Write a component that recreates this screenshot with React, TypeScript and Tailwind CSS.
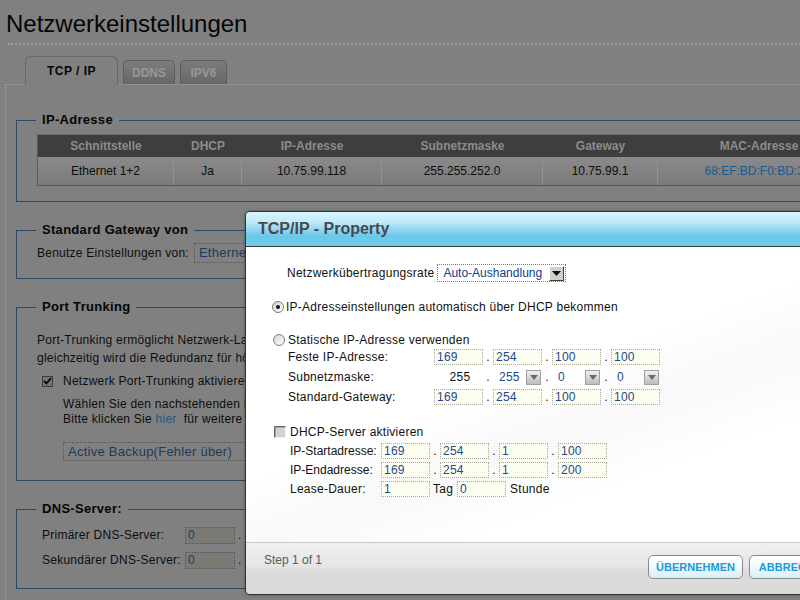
import React from "react";

const Tri = ({ big }: { big?: boolean }) =>
  big ? (
    <svg width="9" height="5" viewBox="0 0 9 5">
      <path d="M0 0 H9 L4.5 5 Z" fill="#111" />
    </svg>
  ) : (
    <svg width="8" height="5" viewBox="0 0 8 5">
      <path d="M0 0 H8 L4 5 Z" fill="#6a6a6a" />
    </svg>
  );

const Field = ({ v }: { v: string }) => (
  <div className="w-[49px] h-[16px] border border-dotted border-[#a9a99c] bg-[#fdfdef] pl-[2px] text-[#1c4a94] leading-[14px]">
    {v}
  </div>
);

const Sep = () => <div className="w-[10px] text-center leading-[16px] text-[#222]">.</div>;

const SubSel = ({ v }: { v: string }) => (
  <div className="w-[49px] h-[16px] flex items-center justify-between pl-[6px] pr-[1px] text-[#1c4a94]">
    <span>{v}</span>
    <div className="w-[15px] h-[15px] flex items-center justify-center border border-[#a0a0a0] bg-gradient-to-b from-[#f2f2f2] to-[#bdbdbd]">
      <Tri />
    </div>
  </div>
);

const Radio = ({ on }: { on?: boolean }) => (
  <div className="w-[12px] h-[12px] shrink-0 rounded-full border border-[#7a7a7a] bg-gradient-to-br from-[#d6d6d6] to-white flex items-center justify-center">
    {on && <div className="w-[4px] h-[4px] rounded-full bg-[#111]" />}
  </div>
);

const Legend = ({ children }: { children: React.ReactNode }) => (
  <legend className="ml-[-1px] px-[6px] text-[13px] font-bold leading-[16px] tracking-[0.3px] text-[#050505]">
    {children}
  </legend>
);

export default function App() {
  const cols = [136, 68, 140, 161, 115, 202];
  const heads = ["Schnittstelle", "DHCP", "IP-Adresse", "Subnetzmaske", "Gateway", "MAC-Adresse"];
  const vals = ["Ethernet 1+2", "Ja", "10.75.99.118", "255.255.252.0", "10.75.99.1", "68:EF:BD:F0:BD:3C"];
  return (
    <div className="relative w-[800px] h-[600px] overflow-hidden bg-[#808080] font-['Liberation_Sans',Arial,sans-serif] text-[12px] tracking-[0.25px] text-[#0d0d0d]">
      <div className="w-[900px]">
        <h1 className="pl-[6px] pt-[10px] text-[24px] leading-[28px] font-normal tracking-normal text-[#050505]">Netzwerkeinstellungen</h1>
        <div className="ml-[8px] mt-[5px] border-t-2 border-dotted border-[#9c9c9c]" />
        <div className="mt-[11px] flex items-end gap-[5px] pl-[25px]">
          <div className="relative z-10 -mb-px w-[93px] h-[29px] rounded-t-[6px] border border-b-0 border-[#686868] bg-[#808080] flex items-center justify-center text-[12px] font-bold tracking-[0.5px] text-[#050505]">
            TCP / IP
          </div>
          <div className="w-[52px] h-[24px] rounded-t-[5px] border border-b-0 border-[#5e5e5e] bg-gradient-to-b from-[#7c7c7c] to-[#676767] flex items-center justify-center text-[12px] font-bold tracking-normal text-[#979797]">
            DDNS
          </div>
          <div className="w-[47px] h-[24px] rounded-t-[5px] border border-b-0 border-[#5e5e5e] bg-gradient-to-b from-[#7c7c7c] to-[#676767] flex items-center justify-center text-[12px] font-bold tracking-normal text-[#979797]">
            IPV6
          </div>
        </div>
        <div className="ml-[5px] h-[520px] border-t border-l border-dotted border-[#a2a2a2] pl-[10px]">
          {/* IP-Adresse */}
          <fieldset className="mt-[27px] w-[880px] border border-[#2b4866] pl-[20px] pb-[15px]">
            <Legend>IP-Adresse</Legend>
            <div className="mt-[6px] border-l border-[#5a5a5a] tracking-normal">
              <div className="flex h-[23px] bg-[#3e3e3e] border-t border-[#6e6e6e]">
                {heads.map((h, i) => (
                  <div key={h} style={{ width: cols[i] }} className="flex items-center justify-center font-bold text-[#8c8c8c]">
                    {h}
                  </div>
                ))}
              </div>
              <div className="flex h-[29px] bg-gradient-to-b from-[#8a8a8a] to-[#7b7b7b] border-b border-[#575757]">
                {vals.map((v, i) => (
                  <div
                    key={v}
                    style={{ width: cols[i] }}
                    className={`flex items-center justify-center border-r border-[#939393] ${i === 5 ? "text-[#1b5a8c]" : "text-[#0d0d0d]"}`}
                  >
                    {v}
                  </div>
                ))}
              </div>
            </div>
          </fieldset>

          {/* Standard Gateway */}
          <fieldset className="mt-[20px] w-[880px] border border-[#2b4866] pl-[20px] pb-[15px]">
            <Legend>Standard Gateway von</Legend>
            <div className="mt-[5px] flex items-center h-[20px]">
              <span className="whitespace-nowrap">Benutze Einstellungen von:</span>
              <div className="ml-[5px] w-[150px] h-[20px] border border-dotted border-[#555] pl-[4px] flex items-center text-[#1d3a5c] text-[13px]">
                Ethernet 1+2
              </div>
            </div>
          </fieldset>

          {/* Port Trunking */}
          <fieldset className="mt-[20px] w-[880px] border border-[#2b4866] pl-[20px] pb-[19px]">
            <Legend>Port Trunking</Legend>
            <div className="mt-[16px] leading-[18px] whitespace-nowrap">
              <div>Port-Trunking ermöglicht Netzwerk-Lastausgleich durch die Bündelung der Ethernet-Schnittstellen,</div>
              <div>gleichzeitig wird die Redundanz für höhere Verfügbarkeit verbessert.</div>
            </div>
            <div className="mt-[5px] h-[18px] flex items-center pl-[5px]">
              <div className="w-[11px] h-[11px] border border-[#3c3c3c] bg-[#777] flex items-center justify-center">
                <svg width="9" height="8" viewBox="0 0 9 8">
                  <path d="M1 4 L3.5 6.5 L8 1" stroke="#050505" strokeWidth="1.8" fill="none" />
                </svg>
              </div>
              <span className="ml-[10px] whitespace-nowrap">Netzwerk Port-Trunking aktivieren</span>
            </div>
            <div className="mt-[7px] pl-[26px] leading-[15px] whitespace-nowrap">
              <div>Wählen Sie den nachstehenden Port-Trunking-Modus aus.</div>
              <div>
                Bitte klicken Sie <span className="text-[#1b5a8c]">hier</span>&nbsp; für weitere Informationen.
              </div>
              <div className="mt-[15px] w-[220px] h-[19px] border border-dotted border-[#555] pl-[4px] flex items-center text-[#1d3a5c] text-[13px]">
                Active Backup(Fehler über)
              </div>
            </div>
          </fieldset>

          {/* DNS */}
          <fieldset className="mt-[20px] w-[880px] border border-[#2b4866] pl-[20px] pb-[20px]">
            <Legend>DNS-Server:</Legend>
            <div className="mt-[10px] pl-[5px] flex items-center h-[16px]">
              <span className="w-[143px] whitespace-nowrap">Primärer DNS-Server:</span>
              <div className="w-[50px] h-[17px] border border-dotted border-[#555] bg-[#7b7b76] pl-[2px] text-[#1d3a5c] leading-[15px]">0</div>
              <span className="ml-[3px]">.</span>
            </div>
            <div className="mt-[9px] pl-[5px] flex items-center h-[16px]">
              <span className="w-[143px] whitespace-nowrap">Sekundärer DNS-Server:</span>
              <div className="w-[50px] h-[17px] border border-dotted border-[#555] bg-[#7b7b76] pl-[2px] text-[#1d3a5c] leading-[15px]">0</div>
              <span className="ml-[3px]">.</span>
            </div>
          </fieldset>
        </div>
      </div>

      {/* Dialog */}
      <div className="absolute left-[245px] top-[211px] w-[620px] h-[384px] flex flex-col rounded-[5px] border border-[#2f3540] overflow-hidden shadow-[0_0_3px_rgba(0,0,0,0.4)]">
        <div className="h-[35px] shrink-0 border-b border-[#3a3a3a] bg-[linear-gradient(to_bottom,#d8f6fe_0%,#bfe9fa_30%,#8cd4f0_55%,#6ac9e8_70%,#6ecde9_100%)] pl-[12px] flex items-center">
          <span className="text-[16px] font-bold tracking-normal text-[#464a4e]">TCP/IP - Property</span>
        </div>
        <div className="flex-1 bg-[linear-gradient(160deg,#ffffff_0%,#ffffff_45%,#f8f8f8_58%,#ffffff_72%)] text-[#111]">
          <div className="mt-[17px] pl-[41px] flex items-center h-[18px]">
            <span className="whitespace-nowrap">Netzwerkübertragungsrate</span>
            <div className="ml-[3px] w-[129px] h-[18px] border border-dotted border-[#7a7a7a] flex items-center justify-between pl-[5px] pr-[1px] text-[#0e3c8c] tracking-normal">
              <span>Auto-Aushandlung</span>
              <div className="w-[15px] h-[15px] bg-[#d4d0c8] border border-t-white border-l-white border-b-[#404040] border-r-[#404040] flex items-center justify-center">
                <Tri big />
              </div>
            </div>
          </div>
          <div className="mt-[17px] pl-[26px] h-[16px] flex items-center">
            <Radio on />
            <span className="ml-[2px] whitespace-nowrap">IP-Adresseinstellungen automatisch über DHCP bekommen</span>
          </div>
          <div className="mt-[17px] pl-[27px] h-[15px] flex items-center">
            <Radio />
            <span className="ml-[3px] whitespace-nowrap">Statische IP-Adresse verwenden</span>
          </div>
          <div className="pl-[42px]">
            <div className="h-[20px] flex items-center">
              <span className="w-[146px] shrink-0 whitespace-nowrap">Feste IP-Adresse:</span>
              <Field v="169" />
              <Sep />
              <Field v="254" />
              <Sep />
              <Field v="100" />
              <Sep />
              <Field v="100" />
            </div>
            <div className="h-[20px] flex items-center">
              <span className="w-[146px] shrink-0 whitespace-nowrap">Subnetzmaske:</span>
              <div className="w-[49px] text-center pl-[3px]">255</div>
              <Sep />
              <SubSel v="255" />
              <Sep />
              <SubSel v="0" />
              <Sep />
              <SubSel v="0" />
            </div>
            <div className="h-[20px] flex items-center">
              <span className="w-[146px] shrink-0 whitespace-nowrap">Standard-Gateway:</span>
              <Field v="169" />
              <Sep />
              <Field v="254" />
              <Sep />
              <Field v="100" />
              <Sep />
              <Field v="100" />
            </div>
          </div>
          <div className="mt-[17px] pl-[28px] h-[16px] flex items-center">
            <div className="w-[12px] h-[12px] bg-[#d6d3cc] border border-t-[#6a6a6a] border-l-[#6a6a6a] border-b-[#f4f4f4] border-r-[#f4f4f4] shadow-[inset_1px_1px_0_#a0a0a0]" />
            <span className="ml-[4px] whitespace-nowrap">DHCP-Server aktivieren</span>
          </div>
          <div className="mt-[1px] pl-[44px]">
            <div className="h-[19px] flex items-center">
              <span className="w-[91px] shrink-0 whitespace-nowrap tracking-normal">IP-Startadresse:</span>
              <Field v="169" />
              <Sep />
              <Field v="254" />
              <Sep />
              <Field v="1" />
              <Sep />
              <Field v="100" />
            </div>
            <div className="h-[19px] flex items-center">
              <span className="w-[91px] shrink-0 whitespace-nowrap tracking-normal">IP-Endadresse:</span>
              <Field v="169" />
              <Sep />
              <Field v="254" />
              <Sep />
              <Field v="1" />
              <Sep />
              <Field v="200" />
            </div>
            <div className="h-[19px] flex items-center">
              <span className="w-[91px] shrink-0 whitespace-nowrap">Lease-Dauer:</span>
              <Field v="1" />
              <span className="ml-[3px] mr-[4px]">Tag</span>
              <Field v="0" />
              <span className="ml-[4px]">Stunde</span>
            </div>
          </div>
        </div>
        <div className="h-[52px] shrink-0 border-t border-[#c8c8c8] bg-[linear-gradient(to_bottom,#efefef_0%,#e6e6e6_45%,#dcdcdc_55%,#d9d9d9_100%)] flex items-start px-[18px]">
          <div className="w-[384px] mt-[10px] leading-[14px] text-[#5a5a5a] tracking-normal">Step 1 of 1</div>
          <div className="mt-[12px] flex gap-[6px] tracking-normal">
            <div className="w-[95px] h-[24px] rounded-[5px] border border-[#8a8a8a] bg-gradient-to-b from-white via-[#f0f9fc] to-[#d8eef8] flex items-center justify-center text-[11px] font-bold text-[#1d9bd8]">
              ÜBERNEHMEN
            </div>
            <div className="w-[90px] h-[24px] rounded-[5px] border border-[#8a8a8a] bg-gradient-to-b from-white via-[#f0f9fc] to-[#d8eef8] flex items-center justify-center text-[11px] font-bold text-[#1d9bd8]">
              ABBRECHEN
            </div>
          </div>
        </div>
      </div>
    </div>
  );
}
